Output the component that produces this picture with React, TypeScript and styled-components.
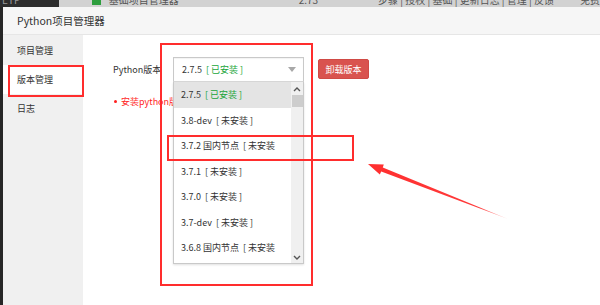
import React from 'react'
import styled, { createGlobalStyle } from 'styled-components'

const GlobalStyle = createGlobalStyle`
  html, body {
    margin: 0;
    padding: 0;
    background: #2b2b2b;
  }
  * {
    box-sizing: border-box;
  }
`

const FONT = `"Noto Sans CJK SC", "Noto Sans", sans-serif`

const versions = [
  { name: '2.7.5', state: '[ 已安装 ]', installed: true },
  { name: '3.8-dev', state: '[ 未安装 ]' },
  { name: '3.7.2 国内节点', state: '[ 未安装' },
  { name: '3.7.1', state: '[ 未安装 ]' },
  { name: '3.7.0', state: '[ 未安装 ]' },
  { name: '3.7-dev', state: '[ 未安装 ]' },
  { name: '3.6.8 国内节点', state: '[ 未安装' }
]

const navItems = ['项目管理', '版本管理', '日志']

const App = () => {
  return (
    <Root>
      <GlobalStyle />
      <Backdrop>
        <TopStrip>
          <StripDark>
            <StripText $light>ETP</StripText>
          </StripDark>
          <StripGrey>
            <GreenMark />
            <StripText>基础项目管理器</StripText>
            <StripText style={{ marginLeft: 120 }}>2.73</StripText>
            <StripText style={{ marginLeft: 60 }}>步骤 | 授权 | 基础 | 更新日志 | 管理 | 反馈</StripText>
            <StripText style={{ marginLeft: 26 }}>免费</StripText>
          </StripGrey>
        </TopStrip>
        <DesktopRow>
          <EdgeDark />
          <Dialog>
            <TitleBar>Python项目管理器</TitleBar>
            <DialogBody>
              <Sidebar>
                {navItems.map((item) => (
                  <NavItem key={item} $active={item === '版本管理'}>
                    {item}
                  </NavItem>
                ))}
              </Sidebar>
              <Content>
                <FormRow>
                  <Label>Python版本</Label>
                  <SelectWrap>
                    <SelectBox>
                      <span>2.7.5</span>
                      <State $installed>[ 已安装 ]</State>
                      <Caret />
                    </SelectBox>
                    <Dropdown>
                      <OptionList>
                        {versions.map((v, i) => (
                          <Option key={v.name} $selected={i === 0}>
                            <span>{v.name}</span>
                            <State $installed={v.installed}>{v.state}</State>
                          </Option>
                        ))}
                      </OptionList>
                      <ScrollTrack>
                        <ScrollArrow viewBox="0 0 8 5">
                          <path d="M1 4 L4 1 L7 4" />
                        </ScrollArrow>
                        <Thumb />
                        <TrackSpace />
                        <ScrollArrow viewBox="0 0 8 5">
                          <path d="M1 1 L4 4 L7 1" />
                        </ScrollArrow>
                      </ScrollTrack>
                    </Dropdown>
                  </SelectWrap>
                  <DangerButton>卸载版本</DangerButton>
                </FormRow>
                <Notice>
                  <Dot />
                  安装python版本
                </Notice>
              </Content>
            </DialogBody>
          </Dialog>
        </DesktopRow>
      </Backdrop>

      <MarkBox $x={8} $y={65} $w={76} $h={32} />
      <MarkBox $x={160} $y={43} $w={153} $h={243} />
      <MarkBox $x={167} $y={135} $w={187} $h={26} />
      <ArrowSvg width="600" height="305" viewBox="0 0 600 305">
        <defs>
          <linearGradient id="fade" x1="368" y1="164" x2="508" y2="219" gradientUnits="userSpaceOnUse">
            <stop offset="0" stopColor="#ff2f2f" />
            <stop offset="0.8" stopColor="#ff3a3a" />
            <stop offset="1" stopColor="#ff6b6b" stopOpacity="0.4" />
          </linearGradient>
        </defs>
        <polygon
          points="368,164 383.8,164.6 382.8,167.6 508,219 381.2,171.6 379.8,174.6"
          fill="url(#fade)"
        />
      </ArrowSvg>
    </Root>
  )
}

const Root = styled.div`
  position: relative;
  width: 600px;
  height: 305px;
  overflow: hidden;
  font-family: ${FONT};
`

const Backdrop = styled.div`
  display: flex;
  flex-direction: column;
  width: 100%;
  height: 100%;
  background: #2b2b2b;
`

const TopStrip = styled.div`
  display: flex;
  height: 7px;
  overflow: hidden;
  flex-shrink: 0;
`

const StripDark = styled.div`
  width: 92px;
  background: #2d2d2d;
  display: flex;
  padding-left: 2px;
`

const StripGrey = styled.div`
  flex: 1;
  background: #d2d2d2;
  display: flex;
  align-items: flex-start;
  padding-left: 33px;
`

const StripText = styled.span<{ $light?: boolean }>`
  font-size: 10px;
  line-height: 10px;
  margin-top: -5px;
  white-space: nowrap;
  color: ${(p) => (p.$light ? '#9a9a9a' : '#555')};
`

const GreenMark = styled.span`
  width: 9px;
  height: 5px;
  background: #2e9e3e;
  margin-right: 8px;
`

const DesktopRow = styled.div`
  display: flex;
  flex: 1;
  min-height: 0;
`

const EdgeDark = styled.div`
  width: 3px;
  background: #262626;
`

const Dialog = styled.div`
  flex: 1;
  display: flex;
  flex-direction: column;
  background: #fff;
`

const TitleBar = styled.div`
  height: 28px;
  flex-shrink: 0;
  display: flex;
  align-items: center;
  padding-left: 14px;
  background: #f6f6f6;
  border-bottom: 1px solid #e6e6e6;
  color: #333;
  font-size: 10.5px;
`

const DialogBody = styled.div`
  flex: 1;
  display: flex;
`

const Sidebar = styled.div`
  width: 80px;
  background: #f0f0f0;
  padding-top: 1px;
  display: flex;
  flex-direction: column;
`

const NavItem = styled.div<{ $active?: boolean }>`
  height: 29px;
  display: flex;
  align-items: center;
  padding-left: 14px;
  font-size: 9px;
  color: #333;
  background: ${(p) => (p.$active ? '#fff' : 'transparent')};
`

const Content = styled.div`
  flex: 1;
  padding: 22px 0 0 30px;
  display: flex;
  flex-direction: column;
`

const FormRow = styled.div`
  display: flex;
  align-items: flex-start;
`

const Label = styled.div`
  width: 60px;
  height: 25px;
  display: flex;
  align-items: center;
  font-size: 9px;
  color: #333;
`

const SelectWrap = styled.div`
  position: relative;
  width: 131px;
`

const SelectBox = styled.div`
  height: 25px;
  display: flex;
  align-items: center;
  gap: 4px;
  padding-left: 8px;
  border: 1px solid #c9c9c9;
  border-bottom-color: #d8d8d8;
  background: #fff;
  font-size: 9px;
  color: #333;
  box-shadow: inset 0 1px 1px rgba(0, 0, 0, 0.05);
`

const State = styled.span<{ $installed?: boolean }>`
  color: ${(p) => (p.$installed ? '#20a53a' : '#333')};
  white-space: nowrap;
`

const Caret = styled.span`
  margin-left: auto;
  margin-right: 7px;
  width: 0;
  height: 0;
  border-left: 4px solid transparent;
  border-right: 4px solid transparent;
  border-top: 5px solid #a8a8a8;
`

const Dropdown = styled.div`
  position: absolute;
  top: 25px;
  left: 0;
  width: 131px;
  height: 182px;
  display: flex;
  background: #fff;
  border: 1px solid #c9c9c9;
  border-top: none;
  box-shadow: 0 1px 2px rgba(0, 0, 0, 0.12);
  z-index: 2;
`

const OptionList = styled.div`
  flex: 1;
  display: flex;
  flex-direction: column;
  overflow: hidden;
`

const Option = styled.div<{ $selected?: boolean }>`
  height: 25.5px;
  flex-shrink: 0;
  display: flex;
  align-items: center;
  gap: 4px;
  padding-left: 7px;
  font-size: 9px;
  color: #333;
  white-space: nowrap;
  background: ${(p) => (p.$selected ? '#e4e4e4' : '#fff')};
`

const ScrollTrack = styled.div`
  width: 12px;
  background: #f0f0f0;
  display: flex;
  flex-direction: column;
  align-items: center;
  padding: 5px 0 3px;
`

const ScrollArrow = styled.svg`
  width: 8px;
  height: 5px;
  fill: none;
  stroke: #555;
  stroke-width: 1.4;
`

const Thumb = styled.div`
  width: 11px;
  height: 12px;
  margin-top: 3px;
  background: #cdcdcd;
`

const TrackSpace = styled.div`
  flex: 1;
`

const DangerButton = styled.button`
  margin-left: 14px;
  margin-top: 2px;
  width: 51px;
  height: 20px;
  border: 1px solid #d04a45;
  border-radius: 2px;
  background: #d9534f;
  color: #fff;
  font-family: ${FONT};
  font-size: 9px;
  padding: 0;
`

const Notice = styled.div`
  margin-top: 13px;
  display: flex;
  align-items: center;
  gap: 4px;
  font-size: 9px;
  color: #ff1f1f;
  white-space: nowrap;
`

const Dot = styled.span`
  width: 3px;
  height: 3px;
  border-radius: 50%;
  background: #ff1f1f;
  margin-left: 1px;
`

const MarkBox = styled.div<{ $x: number; $y: number; $w: number; $h: number }>`
  position: absolute;
  left: ${(p) => p.$x}px;
  top: ${(p) => p.$y}px;
  width: ${(p) => p.$w}px;
  height: ${(p) => p.$h}px;
  border: 2px solid #ff2d2d;
  pointer-events: none;
  z-index: 5;
`

const ArrowSvg = styled.svg`
  position: absolute;
  left: 0;
  top: 0;
  pointer-events: none;
  z-index: 6;
`

export default App
